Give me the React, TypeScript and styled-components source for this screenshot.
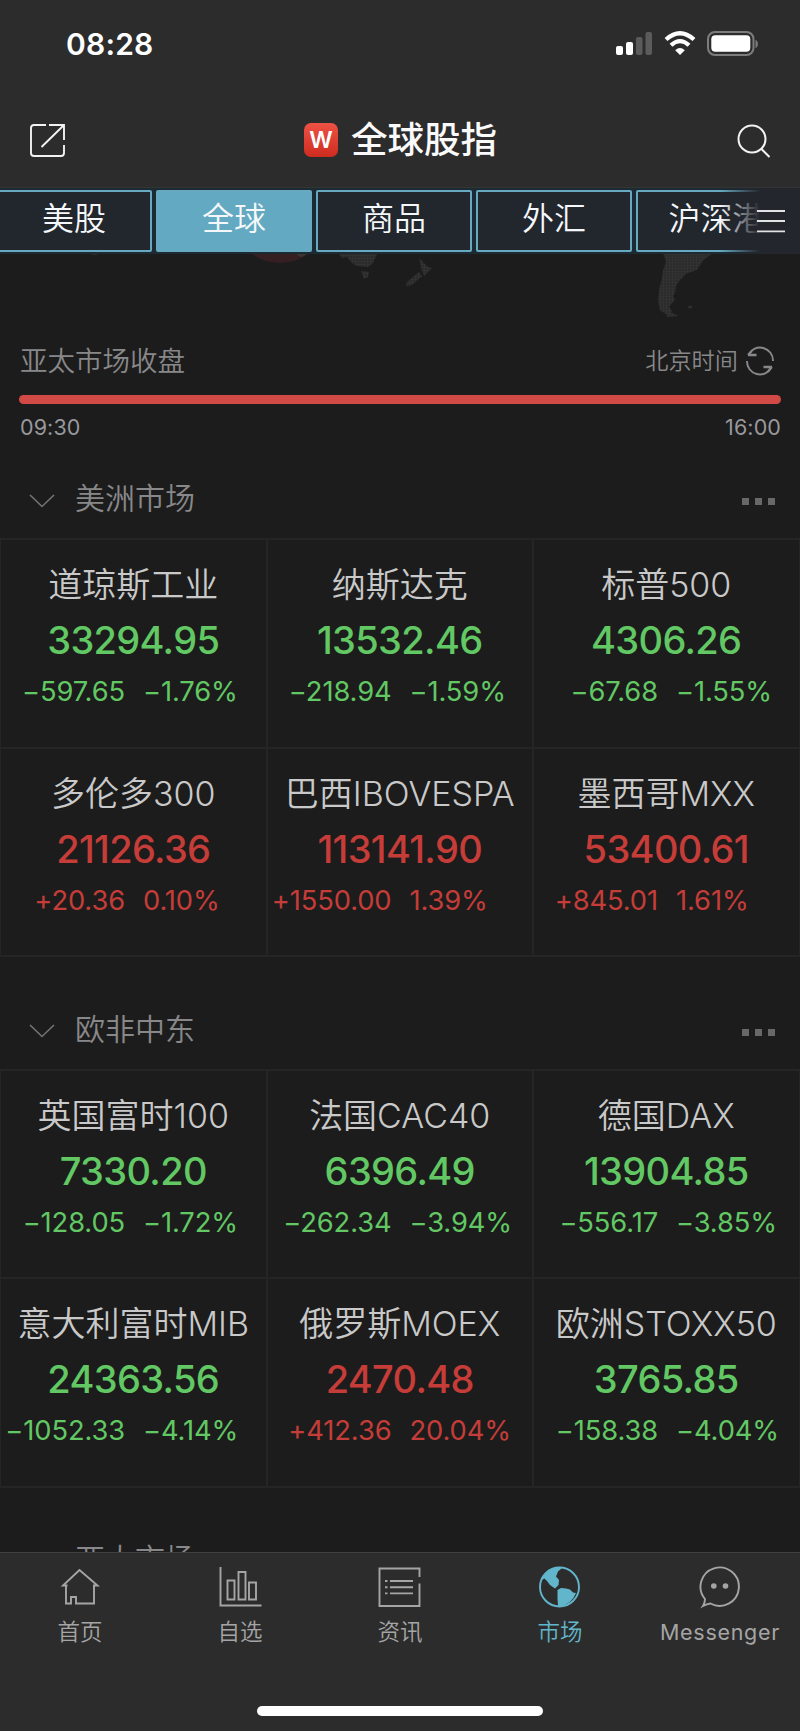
import React from "react";
import styled, { createGlobalStyle, css } from "styled-components";

const GlobalStyle = createGlobalStyle`
  * { box-sizing: border-box; }
  body { margin: 0; background: #1c1c1c; }
`;

const Screen = styled.main`
  width: 800px;
  height: 1731px;
  display: flex;
  flex-direction: column;
  overflow: hidden;
  background: #1c1c1c;
  color: #c9c9c9;
  font-family: Inter, "Noto Sans CJK SC", sans-serif;
  font-weight: 350;
  white-space: nowrap;
`;

const StatusBar = styled.header`
  height: 88px;
  flex: none;
  display: flex;
  align-items: center;
  justify-content: space-between;
  padding: 0 41px 0 66px;
  background: #2c2c2c;
`;

const Clock = styled.time`
  font-size: 30px;
  font-weight: 600;
  letter-spacing: 0.2px;
  color: #fff;
  line-height: 40px;
`;

const TitleBar = styled.div`
  height: 100px;
  flex: none;
  display: flex;
  align-items: center;
  justify-content: space-between;
  padding: 4px 29px 0;
  background: #2c2c2c;
  border-bottom: 1px solid #343434;
`;

const Title = styled.h1`
  margin: 0;
  display: flex;
  align-items: center;
  gap: 13px;
  font-size: 36.5px;
  font-weight: 500;
  line-height: 44px;
  color: #fafafa;
`;

const Logo = styled.span`
  width: 34px;
  height: 34px;
  border-radius: 7px;
  background: linear-gradient(#ee5244, #cf2c20);
  color: #fff;
  font: 600 23px/34px Inter, sans-serif;
  text-align: center;
`;

const Tabs = styled.nav`
  position: relative;
  height: 66px;
  flex: none;
  display: flex;
  gap: 4px;
  padding: 2px 0 2px;
  margin-left: -4px;
  background: #1b2a33;
`;

const Tab = styled.button<{ $active?: boolean; $wide?: boolean }>`
  width: 156px;
  height: 62px;
  flex: none;
  padding: 0 0 4px ${(p) => (p.$wide ? 5 : 0)}px;
  border: 2px solid #67a9c0;
  border-radius: 2px;
  background: ${(p) => (p.$active ? "#62a9c1" : "#22262d")};
  color: #f4f8fa;
  font: 350 32px/50px Inter, "Noto Sans CJK SC", sans-serif;
`;

const TabMenu = styled.div`
  position: absolute;
  top: 0;
  right: 0;
  width: 80px;
  height: 66px;
  background: linear-gradient(90deg, rgba(36, 38, 45, 0), #24262d 40px);
`;

const MapStrip = styled.section`
  height: 81px;
  flex: none;
`;

const Session = styled.section`
  height: 126px;
  flex: none;
  display: flex;
  flex-direction: column;
  padding: 6px 19px 0 20px;
  color: #88888a;
`;

const SessionRow = styled.div`
  height: 40px;
  display: flex;
  justify-content: space-between;
  align-items: center;
  font-size: 27.5px;
  line-height: 36px;
  padding-bottom: 1px;
`;

const TimeZone = styled.div`
  display: flex;
  align-items: center;
  gap: 7px;
  padding-right: 6px;
  font-size: 23.2px;
`;

const Progress = styled.div`
  height: 9px;
  margin: 14px 0 0 -1px;
  border-radius: 5px;
  background: #d24a45;
`;

const Hours = styled.div`
  display: flex;
  justify-content: space-between;
  margin-top: 9px;
  font-size: 21.5px;
  font-weight: 400;
  line-height: 28px;
  letter-spacing: 0.1px;
  color: #98989c;
`;

const Markets = styled.div`
  flex: 1;
  min-height: 0;
  overflow: hidden;
`;

const Region = styled.section`
  height: 530.5px;
`;

const RegionHead = styled.div`
  height: 77px;
  display: flex;
  align-items: center;
  padding: 0 25px 0 29px;
  font-size: 30px;
  color: #88888a;
`;

const RegionName = styled.h2`
  flex: 1;
  margin: 0 0 3px 20px;
  font-size: 30px;
  font-weight: 350;
  line-height: 44px;
`;

const More = styled.div`
  display: flex;
  gap: 6px;
  padding-top: 4px;
`;

const Dot = styled.i`
  width: 7px;
  height: 7px;
  background: #686868;
`;

const Grid = styled.div`
  display: grid;
  grid-template-columns: repeat(3, 266.5px);
  grid-auto-rows: 208.5px;
  border-top: 2px solid #252527;
  border-left: 1px solid #252527;
`;

const Cell = styled.article`
  border-right: 2px solid #252527;
  border-bottom: 2px solid #252527;
  padding-top: 21px;
  display: flex;
  flex-direction: column;
  align-items: center;
`;

const IndexName = styled.h3`
  margin: 0;
  font-size: 34px;
  font-weight: 350;
  line-height: 48px;
  color: #c9c9c9;
`;

const up = css`color: #c53c38;`;
const down = css`color: #62c864;`;

const Price = styled.div<{ $up: boolean }>`
  margin-top: 7px;
  font-size: 38px;
  font-weight: 500;
  line-height: 48px;
  letter-spacing: -0.65px;
  ${(p) => (p.$up ? up : down)}
`;

const Change = styled.div<{ $up: boolean }>`
  width: 100%;
  display: grid;
  grid-template-columns: 124px 1fr;
  column-gap: 18px;
  margin-top: 9px;
  font-size: 27.3px;
  font-weight: 400;
  line-height: 37px;
  letter-spacing: -0.1px;
  ${(p) => (p.$up ? up : down)}
`;

const Amount = styled.span`
  display: flex;
  justify-content: flex-end;
`;

const BottomBar = styled.footer`
  height: 179px;
  flex: none;
  display: flex;
  flex-direction: column;
  align-items: center;
  background: #2c2c2c;
  border-top: 1px solid #414141;
`;

const NavItems = styled.nav`
  width: 800px;
  height: 153px;
  display: grid;
  grid-template-columns: repeat(5, 160px);
`;

const NavItem = styled.div<{ $active?: boolean }>`
  display: flex;
  flex-direction: column;
  align-items: center;
  padding-top: 13px;
  font-size: 22.5px;
  line-height: 30px;
  color: ${(p) => (p.$active ? "#62b6cb" : "#a5a5a5")};
`;

const NavLabel = styled.span<{ $latin?: boolean }>`
  margin-top: 8px;
  ${(p) => p.$latin && css`letter-spacing: 0.7px; font-weight: 400; font-size: 21.5px;`}
`;

const HomeIndicator = styled.div`
  width: 286px;
  height: 10px;
  border-radius: 5px;
  background: #fff;
`;

const StatusIcons = () => (
  <svg width="144" height="26" viewBox="0 0 144 26" fill="none">
    <g fill="#fff">
      <rect x="1" y="15" width="7" height="9" rx="2" />
      <rect x="11" y="11" width="7" height="13" rx="2" />
      <g fill="#5b5b5b">
        <rect x="21" y="6" width="6.5" height="18" rx="2" />
        <rect x="30.500" y="1" width="6.5" height="23" rx="2" />
      </g>
      <path d="M65 24 60.200 19.200Q65 14.800 69.800 19.200Z" />
    </g>
    <path d="M51 8.500Q65-4 79 8.500" stroke="#fff" strokeWidth="4.200" />
    <path d="M56 14.200Q65 6 74 14.200" stroke="#fff" strokeWidth="4.200" />
    <rect x="93" y="1" width="45.500" height="23" rx="7" stroke="#7d7d7d" strokeWidth="2" />
    <rect x="96.300" y="4.300" width="39" height="16.500" rx="4" fill="#fff" />
    <path d="M140.500 9v8c3.200-1 3.200-7 0-8Z" fill="#7d7d7d" />
  </svg>
);

const ShareIcon = () => (
  <svg width="37" height="34" viewBox="0 0 37 34" fill="none" stroke="#f2f2f2" strokeWidth="1.900">
    <path d="M17 2H5Q2 2 2 5v25q0 3 3 3h27q3 0 3-3v-8M20 2h15v15M35 2 12.500 24" />
  </svg>
);

const SearchIcon = () => (
  <svg width="36" height="36" viewBox="0 0 36 36" fill="none" stroke="#f2f2f2" strokeWidth="2">
    <circle cx="17" cy="17" r="13.500" />
    <path d="m26.500 27 8 8" />
  </svg>
);

const MenuIcon = () => (
  <svg width="80" height="66" viewBox="0 0 80 66" stroke="#e0e2e4" strokeWidth="1.800">
    <path d="M37 23h28M37 33h28M37 43.300h28" />
  </svg>
);

const WorldMap = () => (
  <svg width="800" height="81" viewBox="0 0 800 81">
    <defs>
      <pattern id="land" width="3" height="3" patternUnits="userSpaceOnUse">
        <rect width="3" height="3" fill="#2a2a2a" />
        <circle cx="1.500" cy="1.500" r="1" fill="#373737" />
      </pattern>
    </defs>
    <ellipse cx="280" cy="-13" rx="34" ry="22" fill="#351f22" />
    <path d="M297 0h10l-5 3-4-1Z" fill="#3d3335" />
    <g fill="url(#land)">
      <path d="M339 0h38l-4 9-5 4-11-1-5-3-5-6-5 1Z" />
      <path d="m361 17 8 1-1 5-4 2Z" />
      <path d="m419 4 6 6 3 3 4 1-4 4-4 4-2-5Z" />
      <path d="m419 18 3 4-10 9-6 1 1-4Z" />
      <g transform="translate(-1 -1) scale(1 .94)">
        <path d="M664 0h50l-10 8-6 10-11 4-7 8-3 5-1 7-2 4 2 4-6 7 3 5-3 5-9-6-1-5-1-5 1-12 3-12 1-8 3-10Z" />
        <path d="m667 61 13 6-12 1Z" />
        <ellipse cx="691" cy="57.500" rx="2.500" ry="1.500" />
      </g>
    </g>
    <path d="M89 0h10l-4 1Z" fill="#303030" />
  </svg>
);

const RefreshIcon = () => (
  <svg width="30" height="30" viewBox="0 0 30 30" fill="none" stroke="#88888a" strokeWidth="1.900">
    <path d="M3.500 8.500A13 13 0 0 1 28 15M26.500 21.500A13 13 0 0 1 2 15" />
    <path d="M3 9h8.500M27 21h-8.500" strokeWidth="2.300" />
    <path d="M3 9l4-4M27 21l-4 4" />
  </svg>
);

const Chevron = () => (
  <svg width="26" height="20" viewBox="0 0 26 20" fill="none" stroke="#747474" strokeWidth="1.600">
    <path d="m1 5 12 11.500L25 5" />
  </svg>
);

const navPaths = {
  home: <path d="M10 19.500h-4.500L22 4l18 15.500h-4.500M8.500 19v18.500h5v-6.500h5v6.500h18V19" transform="translate(-.5 0)" />,
  chart: <path d="M2.500 1v38.500h41M9.500 14.500h7v19h-7ZM20.500 6h7v27.500h-7ZM31 16.500h7v17h-7Z" />,
  news: (
    <path d="M41.500 11V2.500h-40v37.500h40V17.500M12 15h23M12 21.200h23M12 27.400h23M7 15h2.500M7 21.200h2.500M7 27.400h2.500" />
  ),
  globe: (
    <>
      <circle cx="21.500" cy="21" r="19.500" />
      <path fill="currentColor" stroke="none" d="M3.500 14Q9 2 21.500 1.500l2 1-3.500 3-2 5 3 3.500-.5 5-3.500 3.500-5-3.500-3-4-2.500-2.500ZM19.500 24l3.500-2 5 .5 4 1 3 3 3 .5Q34 38 21.500 40.500l-1.500-1-.5-7Z" />
    </>
  ),
  chat: (
    <>
      <path d="M7 33A19.200 19.200 0 1 1 12.500 37.500q-3.500.5-7.500 2.500 2-3 2-7Z" />
      <circle cx="15.800" cy="20" r="2.800" fill="currentColor" stroke="none" />
      <circle cx="27.500" cy="20" r="2.800" fill="currentColor" stroke="none" />
    </>
  ),
};

const NavIcon = ({ name }: { name: keyof typeof navPaths }) => (
  <svg width="44" height="43" viewBox="0 0 44 43" fill="none" stroke="currentColor" strokeWidth="1.900">
    {navPaths[name]}
  </svg>
);

type Quote = [name: string, price: string, amount: string, percent: string];

const regions: { name: string; quotes: Quote[] }[] = [
  {
    name: "美洲市场",
    quotes: [
      ["道琼斯工业", "33294.95", "−597.65", "−1.76%"],
      ["纳斯达克", "13532.46", "−218.94", "−1.59%"],
      ["标普500", "4306.26", "−67.68", "−1.55%"],
      ["多伦多300", "21126.36", "+20.36", "0.10%"],
      ["巴西IBOVESPA", "113141.90", "+1550.00", "1.39%"],
      ["墨西哥MXX", "53400.61", "+845.01", "1.61%"],
    ],
  },
  {
    name: "欧非中东",
    quotes: [
      ["英国富时100", "7330.20", "−128.05", "−1.72%"],
      ["法国CAC40", "6396.49", "−262.34", "−3.94%"],
      ["德国DAX", "13904.85", "−556.17", "−3.85%"],
      ["意大利富时MIB", "24363.56", "−1052.33", "−4.14%"],
      ["俄罗斯MOEX", "2470.48", "+412.36", "20.04%"],
      ["欧洲STOXX50", "3765.85", "−158.38", "−4.04%"],
    ],
  },
  { name: "亚太市场", quotes: [] },
];

const navItems: { icon: keyof typeof navPaths; label: string }[] = [
  { icon: "home", label: "首页" },
  { icon: "chart", label: "自选" },
  { icon: "news", label: "资讯" },
  { icon: "globe", label: "市场" },
  { icon: "chat", label: "Messenger" },
];

export default function App() {
  return (
    <>
      <GlobalStyle />
      <Screen>
        <StatusBar>
          <Clock>08:28</Clock>
          <StatusIcons />
        </StatusBar>
        <TitleBar>
          <ShareIcon />
          <Title>
            <Logo>W</Logo>全球股指
          </Title>
          <SearchIcon />
        </TitleBar>
        <Tabs>
          {["美股", "全球", "商品", "外汇", "沪深港"].map((t) => (
            <Tab key={t} $active={t === "全球"} $wide={t.length > 2}>{t}</Tab>
          ))}
          <TabMenu>
            <MenuIcon />
          </TabMenu>
        </Tabs>
        <MapStrip>
          <WorldMap />
        </MapStrip>
        <Session>
          <SessionRow>
            <span>亚太市场收盘</span>
            <TimeZone>
              北京时间
              <RefreshIcon />
            </TimeZone>
          </SessionRow>
          <Progress />
          <Hours>
            <span>09:30</span>
            <span>16:00</span>
          </Hours>
        </Session>
        <Markets>
          {regions.map((r) => (
            <Region key={r.name}>
              <RegionHead>
                <Chevron />
                <RegionName>{r.name}</RegionName>
                <More>
                  <Dot />
                  <Dot />
                  <Dot />
                </More>
              </RegionHead>
              <Grid>
                {r.quotes.map(([name, price, amount, percent]) => {
                  const rising = amount.startsWith("+");
                  return (
                    <Cell key={name}>
                      <IndexName>{name}</IndexName>
                      <Price $up={rising}>{price}</Price>
                      <Change $up={rising}>
                        <Amount>{amount}</Amount>
                        <span>{percent}</span>
                      </Change>
                    </Cell>
                  );
                })}
              </Grid>
            </Region>
          ))}
        </Markets>
        <BottomBar>
          <NavItems>
            {navItems.map(({ icon, label }) => (
              <NavItem key={icon} $active={icon === "globe"}>
                <NavIcon name={icon} />
                <NavLabel $latin={icon === "chat"}>{label}</NavLabel>
              </NavItem>
            ))}
          </NavItems>
          <HomeIndicator />
        </BottomBar>
      </Screen>
    </>
  );
}
